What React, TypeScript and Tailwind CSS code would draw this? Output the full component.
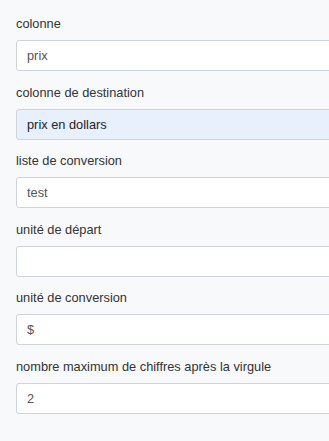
const fields = [
  { label: "colonne", value: "prix", filled: false },
  { label: "colonne de destination", value: "prix en dollars", filled: true },
  { label: "liste de conversion", value: "test", filled: false },
  { label: "unité de départ", value: "", filled: false },
  { label: "unité de conversion", value: "$", filled: false },
  { label: "nombre maximum de chiffres après la virgule", value: "2", filled: false },
];

export default function App() {
  return (
    <div className="h-[441px] w-[329px] overflow-hidden bg-[#f8f9fa] pl-4 pt-[15px] font-['Liberation_Sans',Arial,sans-serif] text-[12.8px]">
      {fields.map((f) => (
        <div key={f.label} className="mb-[12.6px] flex flex-col">
          <label className="mb-[7px] leading-[18px] text-[#333]">{f.label}</label>
          <input
            readOnly
            value={f.value}
            className={`h-[31px] w-[340px] rounded-[3px] border border-[#ced4da] px-[10px] text-[12.8px] outline-none ${
              f.filled ? "bg-[#e8f0fe] text-[#212529]" : "bg-white text-[#555]"
            }`}
          />
        </div>
      ))}
    </div>
  );
}
